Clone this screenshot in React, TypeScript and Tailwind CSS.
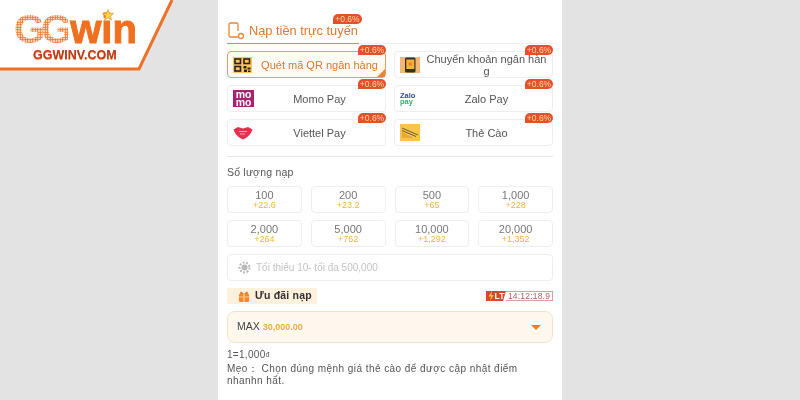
const sans = "font-['Liberation_Sans','Noto_Sans',sans-serif]";

const Badge = () => (
  <span className="absolute -top-[7px] -right-[1px] h-[10px] w-[28px] rounded-t-full rounded-br-full bg-[#e2502c] text-center text-[8.5px] leading-[10px] text-[#ffd9a0]">
    +0.6%
  </span>
);

const QrIcon = () => (
  <svg width="19" height="16" viewBox="0 0 19 16">
    <rect width="19" height="16" fill="#f6c85f" />
    <g fill="none" stroke="#2b2118" strokeWidth="1.6">
      <rect x="2" y="2" width="5.500" height="4.500" />
      <rect x="11" y="2" width="5.500" height="4.500" />
      <rect x="2" y="9.500" width="5.500" height="4.500" />
    </g>
    <path d="M10.500 9h3v2.500h-3zM14.500 10.500h3v2h-3zM11 12.500h3V15h-3zM15 13.500h2.500V15H15z" fill="#2b2118" />
  </svg>
);

const BankIcon = () => (
  <svg width="20" height="16" viewBox="0 0 20 16">
    <rect width="20" height="16" fill="#f3b778" />
    <rect x="5" y="0.500" width="10.500" height="15" rx="1.500" fill="#33302c" />
    <rect x="6.300" y="2.500" width="8" height="9.500" fill="#f4b53e" />
    <circle cx="10.300" cy="7" r="2" fill="#e58a2c" />
  </svg>
);

const MomoIcon = () => (
  <div className={`flex h-[17px] w-[21px] flex-col items-center justify-center bg-[#a5236f] text-[10.500px] font-bold leading-[7.5px] text-white ${sans}`}>
    <span>mo</span>
    <span>mo</span>
  </div>
);

const ZaloIcon = () => (
  <div className={`w-[20px] text-[7.5px] font-bold leading-[6px] ${sans}`}>
    <div className="text-[#2b4aa8]">Zalo</div>
    <div className="text-[#2fae7a]">pay</div>
  </div>
);

const ViettelIcon = () => (
  <svg width="20" height="15" viewBox="0 0 20 15">
    <path d="M0.500 4.500L5 2l5 1.500L15 2l4.500 2.500C18 9.500 14 13 10 14.500 6 13 2 9.500 0.500 4.500z" fill="#e5304f" />
    <path d="M6 6.500h8M7 9h5" stroke="#f7a8b5" strokeWidth="1" />
  </svg>
);

const CardIcon = () => (
  <svg width="20" height="17" viewBox="0 0 20 17">
    <rect width="20" height="17" fill="#f7c54a" />
    <path d="M2 4l16 7M2 6.500l14 6" stroke="#6b5a33" strokeWidth="1" />
    <path d="M2 8l12 6H2z" fill="#e8a92f" />
  </svg>
);

const methods = [
  { label: "Quét mã QR ngân hàng", icon: <QrIcon />, active: true },
  { label: "Chuyển khoản ngân hàng", icon: <BankIcon /> },
  { label: "Momo Pay", icon: <MomoIcon /> },
  { label: "Zalo Pay", icon: <ZaloIcon /> },
  { label: "Viettel Pay", icon: <ViettelIcon /> },
  { label: "Thẻ Cào", icon: <CardIcon /> },
];

const amounts = [
  ["100", "+22.6"],
  ["200", "+23.2"],
  ["500", "+65"],
  ["1,000", "+228"],
  ["2,000", "+264"],
  ["5,000", "+762"],
  ["10,000", "+1,292"],
  ["20,000", "+1,352"],
];

const Logo = () => (
  <div className="absolute left-0 top-0 h-[72px] w-[176px]">
    <svg width="176" height="72" viewBox="0 0 176 72" className="absolute left-0 top-0">
      <polygon points="0,0 172,0 139,69 0,69" fill="#fff" />
      <polyline points="0,69 139,69 172,0" fill="none" stroke="#ee7127" strokeWidth="3" />
    </svg>
    <div className={`absolute left-[14px] top-[11px] flex items-baseline text-[40px] font-bold leading-[36px] ${sans}`}>
      <span className="bg-[radial-gradient(#ee7127_52%,#fde0cc_58%)] bg-[length:2.500px_2.500px] bg-clip-text tracking-[-4px] text-transparent">GG</span>
      <span className="ml-[2px] text-[#f0701f] [-webkit-text-stroke:1px_#f0701f]">win</span>
    </div>
    <svg width="12" height="12" viewBox="0 0 12 12" className="absolute left-[102px] top-[9px]">
      <polygon points="6,0.500 7.600,4.200 11.500,4.500 8.500,7 9.500,11 6,8.800 2.500,11 3.500,7 0.500,4.500 4.400,4.200" fill="#f8d33a" stroke="#c9772c" strokeWidth="0.500" />
    </svg>
    <div className={`absolute left-[33px] top-[49px] text-[12.500px] font-bold leading-[13px] text-[#bf3a1c] [text-shadow:0_1px_0_#e8a060] ${sans}`}>GGWINV.COM</div>
  </div>
);

export default function App() {
  return (
    <div className={`relative h-[400px] w-[800px] overflow-hidden bg-[#e3e3e3] pl-[218px] blur-[0.4px] ${sans}`}>
      <Logo />
      <div className="h-full w-[344px] bg-white px-[9px] pt-[20px] text-[#555]">
        <div className="flex h-[23px] w-[133px] items-center gap-[4px] pb-[2px]">
          <svg width="18" height="18" viewBox="0 0 18 18" fill="none" stroke="#e8853c" strokeWidth="1.300">
            <path d="M11 15H3.500A1.500 1.500 0 0 1 2 13.500v-11A1.500 1.500 0 0 1 3.500 1h6A1.500 1.500 0 0 1 11 2.500V9" />
            <circle cx="14" cy="14" r="2.500" />
          </svg>
          <div className="relative whitespace-nowrap text-[12.800px] text-[#d9782f]">
            Nạp tiền trực tuyến
            <span className="absolute -top-[7px] right-[-4px] h-[10px] w-[29px] rounded-t-full rounded-br-full bg-[#e2502c] text-center text-[8.500px] leading-[10px] text-[#ffd9a0]">+0.6%</span>
          </div>
        </div>
        <div className="h-px bg-[#eee]">
          <div className="h-px w-[132px] bg-[#e8853c]" />
        </div>

        <div className="mt-[7px] grid grid-cols-2 gap-x-[8px] gap-y-[7px]">
          {methods.map((m) => (
            <div
              key={m.label}
              className={`relative flex h-[27px] items-center rounded-[4px] border pl-[5px] ${
                m.active ? "border-[#e0a060] bg-[#fffaf3] text-[#d9782f]" : "border-[#eee] bg-white text-[#555]"
              }`}
            >
              <div className="flex w-[21px] shrink-0 justify-start">{m.icon}</div>
              <div className="flex-1 break-all px-[4px] text-center text-[11px] leading-[12px]">{m.label}</div>
              <Badge />
              {m.active && (
                <span className="absolute bottom-0 right-0 h-0 w-0 border-b-[8px] border-l-[8px] border-b-[#e8853c] border-l-transparent" />
              )}
            </div>
          ))}
        </div>

        <div className="mt-[10px] h-px bg-[#e8e8e8]" />
        <div className="mt-[9px] text-[10.500px] leading-[12px] tracking-[0.2px]">Số lượng nạp</div>

        <div className="mt-[8px] grid grid-cols-4 gap-x-[9px] gap-y-[7px]">
          {amounts.map(([value, bonus]) => (
            <div key={value} className="flex h-[27px] flex-col items-center justify-center rounded-[4px] border border-[#eee] text-[11px] leading-[10px] text-[#777]">
              <span>{value}</span>
              <span className="text-[9px] leading-[10px] text-[#eeb544]">{bonus}</span>
            </div>
          ))}
        </div>

        <div className="mt-[7px] flex h-[27px] items-center gap-[5px] rounded-[4px] border border-[#eee] pl-[10px] text-[10px] text-[#c4c4c4]">
          <svg width="13" height="13" viewBox="0 0 13 13">
            <circle cx="6.500" cy="6.500" r="3" fill="#b8b8b8" />
            <circle cx="6.500" cy="6.500" r="5" fill="none" stroke="#b8b8b8" strokeWidth="2" strokeDasharray="2 1.500" />
          </svg>
          Tối thiểu 10- tối đa 500,000
        </div>

        <div className="mt-[7px] flex h-[16px] items-center justify-between">
          <div className="flex h-[16px] w-[90px] items-center gap-[5px] bg-[#fdf0dc] pl-[11px] text-[10.500px] font-bold tracking-[0.2px] text-[#333]">
            <svg width="12" height="11" viewBox="0 0 12 12">
              <rect x="0.500" y="3" width="11" height="9" rx="1.500" fill="#f58a25" />
              <rect x="5.300" y="3" width="1.400" height="9" fill="#fbd08f" />
              <rect x="0.500" y="6" width="11" height="1" fill="#fbd08f" />
              <path d="M6 3L2.500 0.500 1.500 3zM6 3L9.500 0.500 10.500 3z" fill="#e8611c" />
            </svg>
            Ưu đãi nạp
          </div>
          <div className="flex h-[10px] items-stretch leading-[10px]">
            <div className="flex w-[20px] items-center justify-center gap-px bg-[#d9452f] text-[8.500px] font-bold text-white [clip-path:polygon(0_0,100%_0,85%_100%,0_100%)]">
              <svg width="6" height="10" viewBox="0 0 6 10">
                <path d="M4 0L0.500 5.500H3L2 10 5.800 4H3.300z" fill="#f8c33a" />
              </svg>
              LT
            </div>
            <div className="flex w-[47px] items-center justify-center border border-l-0 border-[#d9a0a0] text-[8.500px] tracking-[0.2px] text-[#b5606a]">14:12:18.9</div>
          </div>
        </div>

        <div className="mt-[7px] flex h-[32px] items-center justify-between rounded-[8px] border border-[#f5e3c8] bg-[#fef8ef] pl-[9px] pr-[11px] text-[10.500px] text-[#444]">
          <div>
            MAX <span className="text-[9px] font-bold text-[#eeb03c]">30,000.00</span>
          </div>
          <div className="h-0 w-0 border-x-[5px] border-t-[5px] border-x-transparent border-t-[#e57f2e]" />
        </div>

        <div className="mt-[6px] text-[10px] leading-[12px] tracking-[0.3px]">1=1,000<span className="align-top text-[7px]">đ</span></div>
        <div className="mt-[2px] w-[300px] text-[10px] leading-[12px] tracking-[0.45px]">
          Mẹo： Chọn đúng mệnh giá thẻ cào để được cập nhật điểm nhanhn hất.
        </div>
      </div>
    </div>
  );
}
